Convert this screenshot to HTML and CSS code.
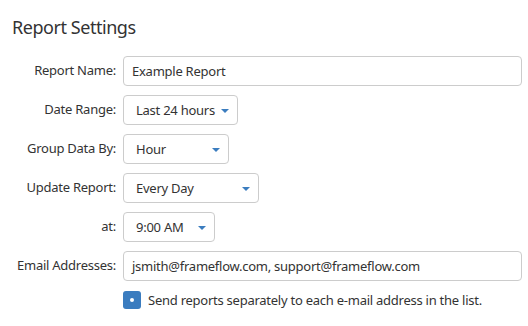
FILE: index.html
```html
<!DOCTYPE html>
<html>
<head>
<meta charset="utf-8">
<link rel="stylesheet" href="styles.css">
</head>
<body>
<div class="page">
  <h1 class="title">Report Settings</h1>
  <div class="form">
    <div class="row">
      <label class="label">Report Name:</label>
      <div class="field input wide">Example Report</div>
    </div>
    <div class="row">
      <label class="label">Date Range:</label>
      <div class="field select w-range"><span>Last 24 hours</span><i class="arrow"></i></div>
    </div>
    <div class="row">
      <label class="label">Group Data By:</label>
      <div class="field select w-group"><span>Hour</span><i class="arrow"></i></div>
    </div>
    <div class="row">
      <label class="label">Update Report:</label>
      <div class="field select w-update"><span>Every Day</span><i class="arrow"></i></div>
    </div>
    <div class="row">
      <label class="label">at:</label>
      <div class="field select w-at"><span>9:00 AM</span><i class="arrow"></i></div>
    </div>
    <div class="row">
      <label class="label">Email Addresses:</label>
      <div class="field input wide">jsmith@frameflow.com, support@frameflow.com</div>
    </div>
    <div class="row check-row">
      <span class="label"></span>
      <div class="check"><span class="checkbox"><i class="dot"></i></span><span class="check-text">Send reports separately to each e-mail address in the list.</span></div>
    </div>
  </div>
</div>
</body>
</html>
```

FILE: styles.css
```css
* { box-sizing: border-box; }
html, body { margin: 0; padding: 0; background: #fff; }
body {
  font-family: "Noto Sans", "Open Sans", sans-serif;
  color: #333;
  font-size: 13px;
  letter-spacing: -0.25px;
}
.page { padding: 15px 6px 0 12px; }
.title {
  margin: 0;
  font-size: 18px;
  font-weight: 400;
  line-height: 24px;
  letter-spacing: -0.45px;
  color: #333;
}
.form {
  margin-top: 17px;
  display: flex;
  flex-direction: column;
  gap: 9px;
}
.row {
  display: flex;
  align-items: flex-start;
}
.label {
  width: 104px;
  flex: none;
  text-align: right;
  padding-top: 5px;
  line-height: 18px;
  margin-right: 7px;
}
.field {
  height: 30px;
  border: 1px solid #ccc;
  border-radius: 4px;
  display: flex;
  align-items: center;
  line-height: 18px;
  color: #333;
  background: #fff;
}
.input { padding-left: 8px; }
.wide { flex: 1; }
.select {
  padding-left: 12px;
  padding-right: 8px;
  justify-content: space-between;
}
.w-range { width: 115px; }
.w-group { width: 106px; }
.w-update { width: 136px; }
.w-at { width: 92px; }
.arrow {
  width: 0;
  height: 0;
  border-left: 4px solid transparent;
  border-right: 4px solid transparent;
  border-top: 4px solid #3b7dbf;
  margin-top: 1px;
}
.check-row { margin-top: 1px; }
.check {
  display: flex;
  align-items: center;
  gap: 7px;
}
.checkbox {
  width: 18px;
  height: 18px;
  border-radius: 3px;
  background: #3a7cbf;
  display: flex;
  align-items: center;
  justify-content: center;
}
.dot {
  width: 4px;
  height: 4px;
  border-radius: 50%;
  background: #fff;
}
.check-text { line-height: 18px; }
```
